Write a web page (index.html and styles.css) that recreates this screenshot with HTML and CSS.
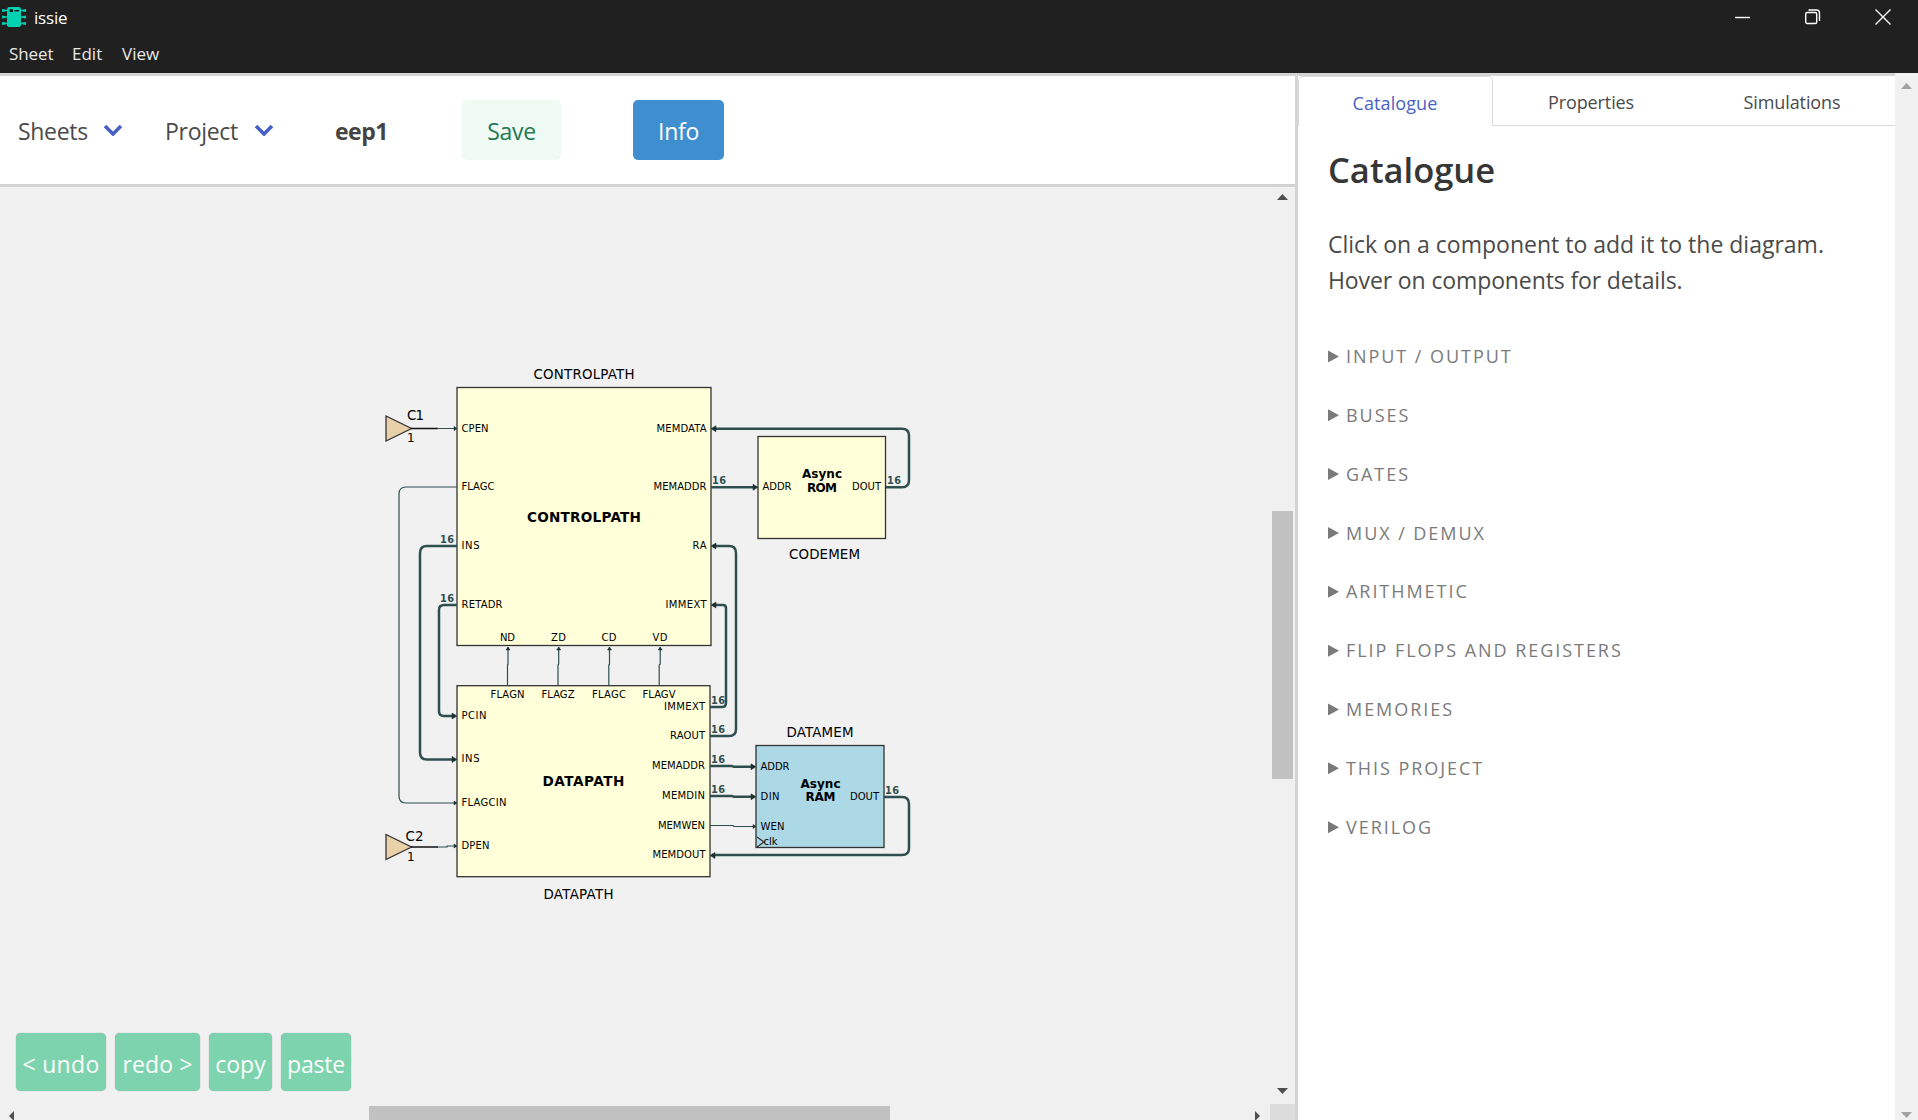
FILE: index.html
```html
<!DOCTYPE html>
<html lang="en">
<head>
<meta charset="utf-8">
<title>issie</title>
<link rel="stylesheet" href="styles.css">
</head>
<body>
<header class="window">
  <div class="titlebar">
    <svg class="logo" width="24" height="20" viewBox="0 0 24 20"><path fill="#00d1b2" d="M6.500 0h11l1.500 1.500v17L17.500 20h-11L5 18.500v-17z"/><path stroke="#00d1b2" stroke-width="1.6" fill="none" d="M5 3.500H2M5 10H2M5 16.500H2M19 3.500h3M19 10h3M19 16.500h3"/><path fill="#00d1b2" d="M0 2l3 .5v2L0 5zM0 8.500l3 .5v2l-3 .5zM0 15l3 .5v2l-3 .5zM24 2l-3 .5v2l3 .5zM24 8.500l-3 .5v2l3 .5zM24 15l-3 .5v2l3 .5z"/><path d="M7.500 2.500l1.500-.5 2 .5V5H7.500zM12.500 3h4.500v1.500h-4.500z" fill="#202020"/></svg>
    <span class="app-name">issie</span>
    <div class="controls">
      <svg width="16" height="16" viewBox="0 0 16 16"><path d="M0 8.500h15"/></svg>
      <svg width="16" height="16" viewBox="0 0 16 16"><rect x=".7" y="3.500" width="11" height="11" rx="1.500"/><path d="M3.500 1h8a3 3 0 0 1 3 3v8"/></svg>
      <svg width="16" height="16" viewBox="0 0 16 16"><path d="M.5.5l15 15M15.500.5l-15 15"/></svg>
    </div>
  </div>
  <nav class="menubar"><span class="m1">Sheet</span><span class="m2">Edit</span><span class="m3">View</span></nav>
</header>
<div class="app">
  <section class="workspace">
    <div class="toolbar">
      <span class="crumb sheets">Sheets</span>
      <svg class="chev" width="20" height="12" viewBox="0 0 20 12"><path d="M2 2l8 8 8-8"/></svg>
      <span class="crumb project">Project</span>
      <svg class="chev" width="20" height="12" viewBox="0 0 20 12"><path d="M2 2l8 8 8-8"/></svg>
      <span class="crumb name">eep1</span>
      <button class="btn save">Save</button>
      <button class="btn info">Info</button>
    </div>
    <div class="canvas">
      <svg class="diagram" width="1270" height="917" viewBox="0 187 1270 917">
        <g class="shape">
          <rect x="457" y="387.500" width="254" height="258"/>
          <rect x="457" y="685.700" width="253" height="191"/>
          <rect x="758" y="436.500" width="127.500" height="102"/>
          <rect class="ram" x="756" y="745.500" width="128" height="102"/>
          <path class="const" d="M386 416v25l25.500-12.500zM386 834.500v25l25.500-12.500z"/>
          <path class="clk" d="M757 837l7 5-7 5"/>
        </g>
        <path class="lead" d="M411 428.500h27M411 847h27"/>
        <g class="thin">
          <path d="M437 428.500h18M437 847h10v-1h9M457 487h-51q-7 0-7 7v302q0 7 7 7h50"/>
          <path d="M507.500 685v-20l.5-1v-17M558 685v-20l.7-1v-17M608.800 685v-20l.7-1v-17M659.200 685v-20l1-1v-17M710 825.500h23l1 1h22"/>
        </g>
        <g class="bus">
          <path d="M457 546h-30q-7 0-7 7v199.500q0 7 7 7h27M457 605h-13q-5 0-5 5v101q0 5 5 5h10"/>
          <path d="M714 428.700h188q7 0 7 7v44.500q0 7-7 7h-16M711 487.300h44M713 546h16q7 0 7 7v176q0 7-7 7h-19M713 605h10q3 0 3 3v95q0 4-4 4h-12"/>
          <path d="M710 766h22l2 .8h20M710 796h22l2 .8h20M884 797h18q7 0 7 7v44q0 7-7 7H712"/>
        </g>
        <g class="heads">
          <path d="M457 428.500l-3-2v4zM457 803l-3-2v4zM457 846l-3-2v4zM756 826.500l-3-2v4zM508 647l-2 3h4zM558.700 647l-2 3h4zM609.500 647l-2 3h4zM660.200 647l-2 3h4z"/>
          <path d="M457 716l-5-3v6zM457 759.500l-5-3v6zM758 487.300l-5-3v6zM756 766.800l-5-3v6zM756 796.800l-5-3v6zM711 428.700l5-3v6zM711 546l5-3v6zM711 605l5-3v6zM710 855.500l5-3v6z"/>
        </g>
        <g class="title">
          <text x="533.500" y="379" textLength="101">CONTROLPATH</text>
          <text x="789" y="559" textLength="71">CODEMEM</text>
          <text x="786.500" y="737" textLength="67">DATAMEM</text>
          <text x="543.500" y="899" textLength="70">DATAPATH</text>
          <text x="407" y="420" textLength="17">C1</text>
          <text x="405.500" y="841" textLength="18">C2</text>
        </g>
        <g class="value"><text x="407" y="442">1</text><text x="407" y="861">1</text></g>
        <g class="kind">
          <text x="527" y="522" textLength="114">CONTROLPATH</text>
          <text x="542.500" y="786" textLength="82">DATAPATH</text>
          <text class="mem" x="802" y="478" textLength="40">Async</text><text class="mem" x="807" y="492" textLength="30">ROM</text>
          <text class="mem" x="800.500" y="788" textLength="40">Async</text><text class="mem" x="805.500" y="801" textLength="30">RAM</text>
        </g>
        <g class="port">
          <text x="461.500" y="432" textLength="27">CPEN</text><text x="461.500" y="490" textLength="33">FLAGC</text><text x="461.500" y="549" textLength="18">INS</text><text x="461.500" y="608" textLength="41">RETADR</text>
          <text x="656.500" y="432" textLength="50">MEMDATA</text><text x="653.500" y="490" textLength="53">MEMADDR</text><text x="692.500" y="549" textLength="14">RA</text><text x="665.500" y="608" textLength="41">IMMEXT</text>
          <text x="500" y="641" textLength="15">ND</text><text x="551" y="641" textLength="15">ZD</text><text x="601.500" y="641" textLength="15">CD</text><text x="652.500" y="641" textLength="15">VD</text>
          <text x="490.500" y="698" textLength="34">FLAGN</text><text x="541.500" y="698" textLength="33">FLAGZ</text><text x="592" y="698" textLength="34">FLAGC</text><text x="642.500" y="698" textLength="33">FLAGV</text>
          <text x="461.500" y="719" textLength="25">PCIN</text><text x="461.500" y="762" textLength="18">INS</text><text x="461.500" y="806" textLength="45">FLAGCIN</text><text x="461.500" y="849" textLength="28">DPEN</text>
          <text x="664" y="710" textLength="41">IMMEXT</text><text x="670" y="739" textLength="35">RAOUT</text><text x="652" y="769" textLength="53">MEMADDR</text><text x="662" y="799" textLength="43">MEMDIN</text><text x="658" y="829" textLength="47">MEMWEN</text><text x="652.500" y="858" textLength="53">MEMDOUT</text>
          <text x="762.500" y="490" textLength="29">ADDR</text><text x="852" y="490" textLength="29">DOUT</text>
          <text x="760.500" y="770" textLength="29">ADDR</text><text x="760.500" y="800" textLength="19">DIN</text><text x="760.500" y="830" textLength="24">WEN</text><text x="850" y="800" textLength="29">DOUT</text><text x="763.500" y="845" textLength="14">clk</text>
        </g>
        <g class="width">
          <text x="440" y="543" textLength="14">16</text><text x="440" y="602" textLength="14">16</text><text x="712" y="484" textLength="14">16</text><text x="887" y="484" textLength="14">16</text>
          <text x="711" y="704" textLength="14">16</text><text x="711" y="733" textLength="14">16</text><text x="711" y="763" textLength="14">16</text><text x="711" y="793" textLength="14">16</text><text x="885" y="794" textLength="14">16</text>
        </g>
      </svg>
      <div class="vbar"><i class="tri up"></i><div class="vthumb"></div><i class="tri down"></i></div>
      <div class="hbar"><i class="tri left"></i><div class="hthumb"></div><i class="tri right"></i></div>
      <div class="corner"></div>
      <div class="actions">
        <button class="undo">&lt; undo</button><button class="redo">redo &gt;</button><button class="copy">copy</button><button class="paste">paste</button>
      </div>
    </div>
  </section>
  <aside class="panel">
    <div class="tabs"><div class="tab active"><span>Catalogue</span></div><div class="tab t2"><span>Properties</span></div><div class="tab t3"><span>Simulations</span></div></div>
    <div class="content">
      <h1>Catalogue</h1>
      <p>Click on a component to add it to the diagram.<br><span class="hover">Hover on components for details.</span></p>
      <ul>
        <li>INPUT / OUTPUT</li><li>BUSES</li><li>GATES</li><li>MUX / DEMUX</li><li>ARITHMETIC</li><li>FLIP FLOPS AND REGISTERS</li><li>MEMORIES</li><li>THIS PROJECT</li><li>VERILOG</li>
      </ul>
    </div>
  </aside>
  <div class="pagebar"><i class="tri up"></i><i class="tri down"></i></div>
</div>
</body>
</html>
```
FILE: styles.css
```css
* { box-sizing: border-box; }
body { margin: 0; width: 1918px; height: 1120px; overflow: hidden; display: flex; flex-direction: column; background: #fff; color: #4a4a4a; font-family: "Open Sans", "Noto Sans", sans-serif; font-size: 23px; }
.window { flex: none; height: 73px; background: #202020; color: #fff; font-size: 17px; }
.titlebar { display: flex; align-items: center; height: 34px; padding: 0 27px 0 2px; }
.app-name { margin-left: 8px; letter-spacing: -.2px; }
.controls { margin-left: auto; margin-top: -1px; display: flex; gap: 54px; }
.controls svg { fill: none; stroke: #fff; stroke-width: 1.4; }
.menubar { display: flex; align-items: center; height: 38px; padding-left: 9px; color: #e8e8e8; }
.m1 { width: 63px; letter-spacing: -.1px; }
.m2 { width: 50px; }
.app { flex: 1; display: flex; min-height: 0; }
.workspace { width: 1298px; flex: none; display: flex; flex-direction: column; border-top: 3px solid #d3d3d3; border-right: 3px solid #d3d3d3; }
.toolbar { height: 111px; flex: none; display: flex; align-items: center; padding-left: 18px; border-bottom: 3px solid #d3d3d3; }
.crumb { white-space: nowrap; letter-spacing: -.3px; padding-top: 2px; }
.sheets { width: 85px; }
.project { width: 89px; margin-left: 42px; }
.name { width: 127px; margin-left: 61px; font-weight: 700; color: #444; letter-spacing: -.5px; }
.chev { fill: none; stroke: #485fc7; stroke-width: 3.6; }
button { border: 0; padding: 0; font: inherit; white-space: nowrap; }
.btn { height: 60px; border-radius: 5px; letter-spacing: -.3px; padding-top: 2px; }
.save { width: 99px; background: #effaf5; color: #257953; }
.info { width: 91px; margin-left: 72px; background: #3e8ed0; color: #fff; }
.canvas { flex: 1; min-height: 0; display: grid; grid-template: 917px 16px / 1270px 25px; background: #f1f1f1; position: relative; }
.diagram { display: block; font-family: "DejaVu Sans", sans-serif; }
.shape { fill: #ffffd9; stroke: #333; stroke-width: 1.3; }
.shape .ram { fill: #add8e6; }
.shape .const { fill: #e8d0a9; }
.shape .clk { fill: none; }
.lead { stroke: #111; stroke-width: 1.4; }
.thin, .bus { fill: none; stroke: darkslategray; }
.thin { stroke-width: 1.2; }
.bus { stroke-width: 2.5; }
.heads { fill: #1c3030; stroke: #1c3030; stroke-width: .5; }
.diagram text { fill: #000; }
.title { font-size: 13.4px; }
.value { font-size: 12px; }
.kind { font-size: 13.6px; font-weight: 700; }
.kind .mem { font-size: 12px; }
.port { font-size: 10px; }
.diagram .width text { font-size: 9.8px; font-weight: 700; fill: darkslategray; }
.vbar { background: #f0f0f0; display: flex; flex-direction: column; align-items: center; padding: 7px 0 10px; }
.vthumb { width: 21px; height: 268px; margin-top: 311px; margin-bottom: auto; background: #c1c1c1; }
.hbar { background: #f0f0f0; display: flex; padding: 2px 10px 0 9px; }
.hthumb { width: 521px; margin-left: 355px; margin-right: auto; background: #c1c1c1; }
.corner { background: #dcdcdc; }
.tri { flex: none; width: 11px; height: 6px; background: #505050; }
.up { clip-path: polygon(50% 0, 100% 100%, 0 100%); }
.down { clip-path: polygon(0 0, 100% 0, 50% 100%); }
.left, .right { width: 5px; height: 10px; margin-top: 5px; }
.left { clip-path: polygon(100% 0, 100% 100%, 0 50%); }
.right { clip-path: polygon(0 0, 100% 50%, 0 100%); }
.actions { position: absolute; left: 16px; top: 846px; display: flex; gap: 9px; opacity: .75; }
.actions button { height: 58px; border-radius: 5px; background: #57ca98; color: #fff; box-shadow: 0 0 1px #666; padding-top: 4px; }
.actions .undo { width: 90px; letter-spacing: .3px; }
.actions .redo { width: 85px; letter-spacing: .1px; }
.actions .copy { width: 63px; }
.actions .paste { width: 70px; letter-spacing: -.2px; }
.panel { width: 597px; flex: none; border-top: 3px solid #d3d3d3; }
.tabs { display: flex; height: 50px; font-size: 18px; }
.tab { flex: 1; display: flex; align-items: center; justify-content: center; padding: 2px 5px 0 0; border-bottom: 1px solid #dbdbdb; letter-spacing: -.1px; }
.tab.active { flex: none; width: 195px; padding-right: 1px; letter-spacing: .1px; border: 1px solid #dbdbdb; border-bottom: 0; border-radius: 5px 5px 0 0; color: #485fc7; }
.content { padding: 0 30px; }
h1 { margin: 0; padding-top: 22px; font-size: 34.500px; line-height: 44px; font-weight: 600; color: #363636; }
p { margin: 34px 0 0; font-size: 23px; line-height: 36px; white-space: nowrap; }
.hover { letter-spacing: -.12px; }
ul { list-style: none; margin: 29px 0 0; padding: 0; font-size: 18px; color: #7a7a7a; letter-spacing: 1.95px; }
li { height: 58.850px; line-height: 58.850px; display: flex; align-items: center; white-space: nowrap; }
li::before { content: ""; width: 11px; height: 12px; margin-right: 7px; background: #7a7a7a; clip-path: polygon(0 0, 100% 50%, 0 100%); }
.pagebar { width: 23px; background: #f1f1f1; display: flex; flex-direction: column; align-items: center; justify-content: space-between; padding: 10px 0 2px; }
.pagebar .tri { background: #a3a3a3; }
```
